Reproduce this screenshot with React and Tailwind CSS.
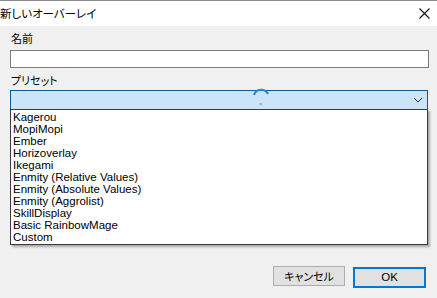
import React from "react";

const presets = [
  "Kagerou",
  "MopiMopi",
  "Ember",
  "Horizoverlay",
  "Ikegami",
  "Enmity (Relative Values)",
  "Enmity (Absolute Values)",
  "Enmity (Aggrolist)",
  "SkillDisplay",
  "Basic RainbowMage",
  "Custom",
];

const jp = "font-['Meiryo_UI','Noto_Sans_CJK_JP',sans-serif] [font-feature-settings:'palt']";

const App = () => {
  return (
    <div className="w-[437px] h-[298px] flex flex-col bg-[#f0f0f0] overflow-hidden text-black">
      {/* title bar */}
      <div className="h-[26px] shrink-0 bg-white border-t border-[#8a8a8a] flex items-center justify-between">
        <span className={`${jp} text-[11.5px] leading-none`}>
          新しいオーバーレイ
        </span>
        <svg className="mr-[7px]" width="11" height="11" viewBox="0 0 11 11">
          <path d="M0.5 0.5 L10.5 10.5 M10.5 0.5 L0.5 10.5" stroke="#111" strokeWidth="1.1" />
        </svg>
      </div>

      {/* body */}
      <div className="flex-1 flex flex-col px-[10px] pt-[5px] pb-[10px]">
        <p className={`${jp} text-[11px] leading-[14px] pl-[1px]`}>名前</p>
        <div className="mt-[5px] h-[18px] w-[419px] bg-white border border-[#7a7a7a]" />

        <p className={`${jp} text-[11px] leading-[14px] pl-[1px] mt-[5px]`}>プリセット</p>
        <div className="relative mt-[3px] w-[418px]">
          <div className="h-[20px] bg-[#cce4f7] border border-[#0e5a93] flex items-center justify-end pr-[4px]">
            <svg width="10" height="6" viewBox="0 0 10 6">
              <path d="M1 1 L5 5 L9 1" fill="none" stroke="#333" strokeWidth="1" />
            </svg>
          </div>
          {/* busy cursor */}
          <svg className="absolute left-[241px] top-[-4px]" width="20" height="20" viewBox="0 0 20 20">
            <path d="M3 9 A7.5 7.5 0 0 1 17 8" fill="none" stroke="#2b83d6" strokeWidth="2" />
            <path d="M8 18 L11 18" stroke="#5a9fe0" strokeWidth="1" />
          </svg>

          {/* dropdown list */}
          <ul className="absolute left-0 top-[19px] w-[418px] bg-white border border-[#3c3c3c] shadow-[2px_2px_2px_rgba(0,0,0,0.3)] pt-[1px] pb-[1px] z-10 font-['Liberation_Sans',sans-serif] text-[11.5px]">
            {presets.map((p) => (
              <li key={p} className="h-[12px] leading-[12px] pl-[2px] whitespace-nowrap">
                {p}
              </li>
            ))}
          </ul>
        </div>

        {/* buttons */}
        <div className="mt-auto flex justify-end gap-[8px] pr-[1px]">
          <button className={`${jp} w-[72px] h-[20px] bg-[#e1e1e1] border border-[#adadad] text-[11px] leading-none`}>
            キャンセル
          </button>
          <button className="w-[73px] h-[21px] bg-[#e1e1e1] border-2 border-[#0078d7] text-[11.5px] leading-none font-['Liberation_Sans',sans-serif] mt-[1px]">
            OK
          </button>
        </div>
      </div>
    </div>
  );
};

export default App;
